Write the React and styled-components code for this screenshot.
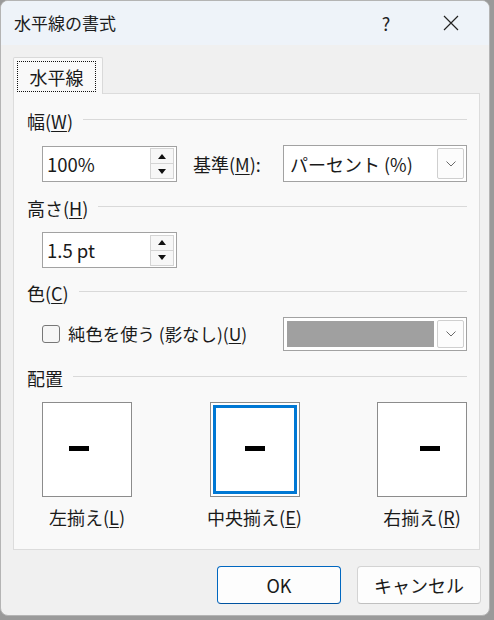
import React from 'react'
import styled, { createGlobalStyle } from 'styled-components'

const GlobalStyle = createGlobalStyle`
  html, body {
    margin: 0;
    padding: 0;
    background: #9a9a9a;
  }
  body {
    font-family: "Noto Sans CJK JP", "Noto Sans", sans-serif;
    color: #1a1a1a;
  }
  u {
    text-underline-offset: 2px;
    text-decoration-thickness: 1px;
  }
`

const Window = styled.div`
  box-sizing: border-box;
  width: 490px;
  height: 616px;
  display: flex;
  flex-direction: column;
  background: #f0f0f0;
  border: 1px solid #b4b4b4;
  border-radius: 8px;
  overflow: hidden;
`

const TitleBar = styled.div`
  height: 44px;
  flex: none;
  display: flex;
  align-items: center;
  background: #eef3f9;
  padding-left: 13px;
`

const Title = styled.div`
  flex: 1;
  font-size: 17px;
  line-height: 24px;
  color: #1b1b1b;
`

const CaptionButton = styled.div`
  width: ${(p) => p.$width}px;
  height: 44px;
  display: flex;
  align-items: center;
  justify-content: center;
  font-size: 18px;
  color: #222;
`

const Body = styled.div`
  flex: 1;
  display: flex;
  flex-direction: column;
  padding: 12px 9px 0 12px;
`

const TabStrip = styled.div`
  display: flex;
  position: relative;
  z-index: 1;
  margin-bottom: -1px;
`

const Tab = styled.div`
  box-sizing: border-box;
  width: 90px;
  height: 37px;
  padding: 3px 6px 2px 3px;
  background: #f9f9f9;
  border: 1px solid #d9d9d9;
  border-bottom: none;
  border-radius: 2px 2px 0 0;
`

const TabFocus = styled.div`
  height: 100%;
  box-sizing: border-box;
  border: 1px dotted #111;
  display: flex;
  align-items: center;
  justify-content: center;
  font-size: 18px;
`

const Panel = styled.div`
  box-sizing: border-box;
  height: 457px;
  background: #f9f9f9;
  border: 1px solid #dcdcdc;
  padding: 15px 12px 0 13px;
`

const Section = styled.div`
  margin-top: ${(p) => p.$top || 0}px;
`

const Heading = styled.div`
  display: flex;
  align-items: center;
  gap: 10px;
  height: 24px;
  font-size: 18px;
  line-height: 24px;
  white-space: nowrap;
`

const Rule = styled.div`
  flex: 1;
  height: 1px;
  background: #d9d9d9;
  margin-top: -3px;
`

const Row = styled.div`
  display: flex;
  align-items: center;
  margin: 12px 0 0 15px;
  height: ${(p) => p.$height}px;
`

const SpinBox = styled.div`
  box-sizing: border-box;
  width: 135px;
  height: 36px;
  display: flex;
  align-items: center;
  background: #fff;
  border: 1px solid #a2a2a2;
  padding: 2px 2px 2px 4px;
`

const SpinValue = styled.div`
  flex: 1;
  font-size: 18.5px;
  line-height: 24px;
`

const SpinButtons = styled.div`
  display: flex;
  flex-direction: column;
  width: 24px;
  height: 31px;
`

const SpinButton = styled.div`
  flex: 1;
  display: flex;
  align-items: center;
  justify-content: center;
  background: #f7f7f7;
  border: 1px solid #d4d4d4;
  & + & {
    border-top: none;
  }
`

const FieldLabel = styled.div`
  font-size: 18px;
  line-height: 24px;
  margin: 0 14px 0 16px;
  white-space: nowrap;
`

const Combo = styled.div`
  box-sizing: border-box;
  width: 184px;
  height: ${(p) => p.$height}px;
  margin-left: auto;
  display: flex;
  align-items: stretch;
  background: #fff;
  border: 1px solid #a2a2a2;
  padding: 2px;
`

const ComboText = styled.div`
  flex: 1;
  display: flex;
  align-items: center;
  padding-left: 4px;
  font-size: 18px;
`

const Swatch = styled.div`
  flex: 1;
  background: ${(p) => p.$color};
  margin: 1px 3px 1px 1px;
`

const DropButton = styled.div`
  width: 25px;
  display: flex;
  align-items: center;
  justify-content: center;
  background: #fcfcfc;
  border: 1px solid #cfcfcf;
  border-radius: 2px;
`

const CheckBox = styled.div`
  box-sizing: border-box;
  width: 18px;
  height: 18px;
  border: 1px solid #777;
  border-radius: 3px;
  background: #f6f6f6;
  margin-right: 8px;
`

const CheckLabel = styled.div`
  font-size: 17.4px;
  line-height: 24px;
  white-space: nowrap;
`

const AlignRow = styled.div`
  display: flex;
  justify-content: space-between;
  margin: 12px 0 0 15px;
`

const AlignOption = styled.div`
  width: 90px;
  display: flex;
  flex-direction: column;
  align-items: center;
`

const AlignBox = styled.div`
  box-sizing: border-box;
  width: 90px;
  height: 95px;
  display: flex;
  align-items: center;
  justify-content: ${(p) => ({ left: 'flex-start', center: 'center', right: 'flex-end' })[p.$align]};
  padding: 0 26px;
  background: #fff;
  border: 1px solid #8c8c8c;
  box-shadow: ${(p) => (p.$selected ? 'inset 0 0 0 2px #fff, inset 0 0 0 5px #0078d4' : 'none')};
`

const Dash = styled.div`
  width: 20px;
  height: 5px;
  background: #000;
  margin-top: -2px;
`

const AlignLabel = styled.div`
  margin-top: 8px;
  font-size: 18px;
  line-height: 24px;
  white-space: nowrap;
`

const ButtonRow = styled.div`
  display: flex;
  justify-content: flex-end;
  gap: 16px;
  margin: 16px -1px 0 0;
`

const DialogButton = styled.div`
  box-sizing: border-box;
  width: 124px;
  height: 38px;
  display: flex;
  align-items: center;
  justify-content: center;
  font-size: 18px;
  background: #fdfdfd;
  border: 1px solid ${(p) => (p.$primary ? '#0067c0' : '#d3d3d3')};
  border-bottom-color: ${(p) => (p.$primary ? '#0053a0' : '#c0c0c0')};
  border-radius: 4px;
`

const Chevron = () => (
  <svg width="10" height="6" viewBox="0 0 10 6">
    <path d="M0.5 0.5 L5 5 L9.5 0.5" fill="none" stroke="#6a6a6a" strokeWidth="1" />
  </svg>
)

const Arrow = ({ up }) => (
  <svg width="8" height="5" viewBox="0 0 8 5">
    <path d={up ? 'M0 5 L4 0 L8 5 Z' : 'M0 0 L8 0 L4 5 Z'} fill="#111" />
  </svg>
)

const Spinner = ({ value }) => (
  <SpinBox>
    <SpinValue>{value}</SpinValue>
    <SpinButtons>
      <SpinButton><Arrow up /></SpinButton>
      <SpinButton><Arrow /></SpinButton>
    </SpinButtons>
  </SpinBox>
)

const SectionHeading = ({ children }) => (
  <Heading>
    <span>{children}</span>
    <Rule />
  </Heading>
)

const alignments = [
  { align: 'left', label: '左揃え', key: 'L' },
  { align: 'center', label: '中央揃え', key: 'E', selected: true },
  { align: 'right', label: '右揃え', key: 'R' },
]

export default function App() {
  return (
    <>
      <GlobalStyle />
      <Window>
        <TitleBar>
          <Title>水平線の書式</Title>
          <CaptionButton $width={54}>?</CaptionButton>
          <CaptionButton $width={76}>
            <svg width="16" height="16" viewBox="0 0 16 16">
              <path d="M1 1 L15 15 M15 1 L1 15" stroke="#222" strokeWidth="1.2" />
            </svg>
          </CaptionButton>
        </TitleBar>
        <Body>
          <TabStrip>
            <Tab>
              <TabFocus>水平線</TabFocus>
            </Tab>
          </TabStrip>
          <Panel>
            <Section>
              <SectionHeading>幅(<u>W</u>)</SectionHeading>
              <Row $height={37}>
                <Spinner value="100%" />
                <FieldLabel>基準(<u>M</u>):</FieldLabel>
                <Combo $height={37}>
                  <ComboText>パーセント (%)</ComboText>
                  <DropButton><Chevron /></DropButton>
                </Combo>
              </Row>
            </Section>
            <Section $top={14}>
              <SectionHeading>高さ(<u>H</u>)</SectionHeading>
              <Row $height={36}>
                <Spinner value="1.5 pt" />
              </Row>
            </Section>
            <Section $top={13}>
              <SectionHeading>色(<u>C</u>)</SectionHeading>
              <Row $height={34}>
                <CheckBox />
                <CheckLabel>純色を使う (影なし)(<u>U</u>)</CheckLabel>
                <Combo $height={34}>
                  <Swatch $color="#a0a0a0" />
                  <DropButton><Chevron /></DropButton>
                </Combo>
              </Row>
            </Section>
            <Section $top={15}>
              <SectionHeading>配置</SectionHeading>
              <AlignRow>
                {alignments.map((a) => (
                  <AlignOption key={a.align}>
                    <AlignBox $align={a.align} $selected={a.selected}>
                      <Dash />
                    </AlignBox>
                    <AlignLabel>
                      {a.label}(<u>{a.key}</u>)
                    </AlignLabel>
                  </AlignOption>
                ))}
              </AlignRow>
            </Section>
          </Panel>
          <ButtonRow>
            <DialogButton $primary>OK</DialogButton>
            <DialogButton>キャンセル</DialogButton>
          </ButtonRow>
        </Body>
      </Window>
    </>
  )
}
